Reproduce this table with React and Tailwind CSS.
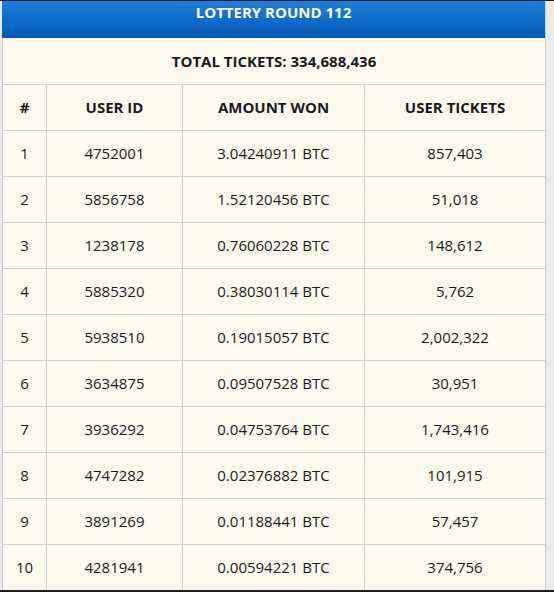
import React from "react";

const rows = [
  ["1", "4752001", "3.04240911 BTC", "857,403"],
  ["2", "5856758", "1.52120456 BTC", "51,018"],
  ["3", "1238178", "0.76060228 BTC", "148,612"],
  ["4", "5885320", "0.38030114 BTC", "5,762"],
  ["5", "5938510", "0.19015057 BTC", "2,002,322"],
  ["6", "3634875", "0.09507528 BTC", "30,951"],
  ["7", "3936292", "0.04753764 BTC", "1,743,416"],
  ["8", "4747282", "0.02376882 BTC", "101,915"],
  ["9", "3891269", "0.01188441 BTC", "57,457"],
  ["10", "4281941", "0.00594221 BTC", "374,756"],
];

export default function App() {
  return (
    <div
      className="w-[554px] h-[592px] overflow-hidden bg-[#ebebeb] border-t border-t-[#1c1c1c] border-b-2 border-b-[#1c1c1c] text-[#1a1a1a]"
      style={{ fontFamily: '"Open Sans", "Liberation Sans", sans-serif' }}
    >
      <div className="ml-[2px] w-[544px] h-full overflow-hidden bg-[#fdfbee] border-r border-[#cfcfcf]">
        <div className="h-[37px] bg-gradient-to-b from-[#2180dc] to-[#0058b6] text-white text-[15px] font-bold text-center leading-[20px] pt-[1px]">
          LOTTERY ROUND 112
        </div>
        <table className="w-[543px] border-collapse table-fixed text-[15px]">
          <colgroup>
            <col className="w-[44px]" />
            <col className="w-[136px]" />
            <col className="w-[182px]" />
            <col className="w-[181px]" />
          </colgroup>
          <tbody>
            <tr className="h-[46px]">
              <td colSpan={4} className="border border-[#cfcfcf] border-t-0 text-center font-bold">
                TOTAL TICKETS: 334,688,436
              </td>
            </tr>
            <tr className="h-[46px] font-bold">
              <td className="border border-[#cfcfcf] text-center">#</td>
              <td className="border border-[#cfcfcf] text-center">USER ID</td>
              <td className="border border-[#cfcfcf] text-center">AMOUNT WON</td>
              <td className="border border-[#cfcfcf] text-center">USER TICKETS</td>
            </tr>
            {rows.map((r) => (
              <tr key={r[0]} className="h-[46px]">
                {r.map((c, i) => (
                  <td key={i} className="border border-[#cfcfcf] text-center">
                    {c}
                  </td>
                ))}
              </tr>
            ))}
          </tbody>
        </table>
      </div>
    </div>
  );
}
